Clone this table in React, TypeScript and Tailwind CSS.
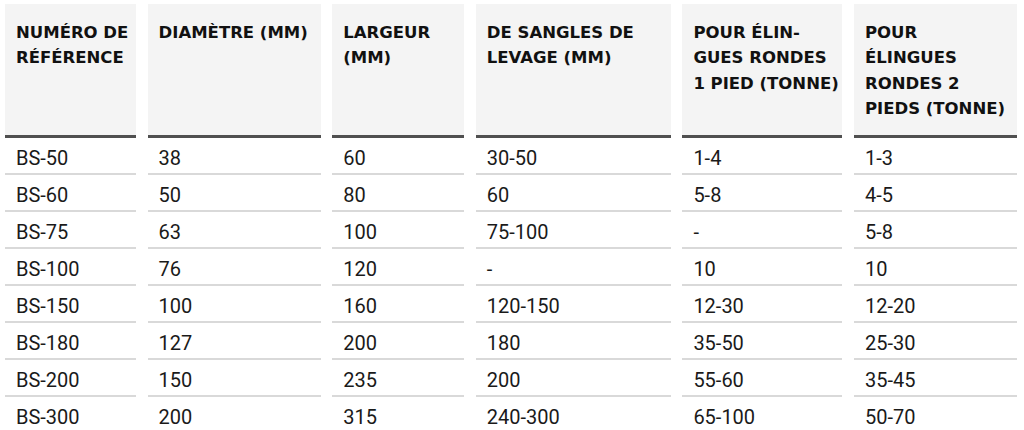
import React from "react";

const headers: string[][] = [
  ["NUMÉRO DE", "RÉFÉRENCE"],
  ["DIAMÈTRE (MM)"],
  ["LARGEUR", "(MM)"],
  ["DE SANGLES DE", "LEVAGE (MM)"],
  ["POUR ÉLIN-", "GUES RONDES", "1 PIED (TONNE)"],
  ["POUR", "ÉLINGUES", "RONDES 2", "PIEDS (TONNE)"],
];

const rows: string[][] = [
  ["BS-50", "38", "60", "30-50", "1-4", "1-3"],
  ["BS-60", "50", "80", "60", "5-8", "4-5"],
  ["BS-75", "63", "100", "75-100", "-", "5-8"],
  ["BS-100", "76", "120", "-", "10", "10"],
  ["BS-150", "100", "160", "120-150", "12-30", "12-20"],
  ["BS-180", "127", "200", "180", "35-50", "25-30"],
  ["BS-200", "150", "235", "200", "55-60", "35-45"],
  ["BS-300", "200", "315", "240-300", "65-100", "50-70"],
];

export default function App() {
  return (
    <div className="h-[430px] w-[1024px] overflow-hidden bg-white pl-[5px] pt-[4px]">
      <div className="grid grid-cols-[131px_173px_132px_195px_160px_163px] gap-x-[11.6px]">
        {headers.map((lines, i) => (
          <div
            key={"h" + i}
            className="h-[134px] whitespace-nowrap border-b-[3px] border-[#505050] bg-[#f4f4f4] pl-[11px] pt-[16px] text-[16.5px] font-bold leading-[25.3px] text-[#111111] [font-family:'DejaVu_Sans',sans-serif]"
          >
            {lines.map((l, j) => (
              <div key={j}>{l}</div>
            ))}
          </div>
        ))}
        {rows.map((r, ri) =>
          r.map((c, ci) => (
            <div
              key={ri + "-" + ci}
              className="h-[37px] whitespace-nowrap border-b-2 border-[#d9d9d9] pl-[11px] pt-[5px] text-[20px] leading-[30px] text-[#1a1a1a] [font-family:Roboto,sans-serif]"
            >
              {c}
            </div>
          ))
        )}
      </div>
    </div>
  );
}
